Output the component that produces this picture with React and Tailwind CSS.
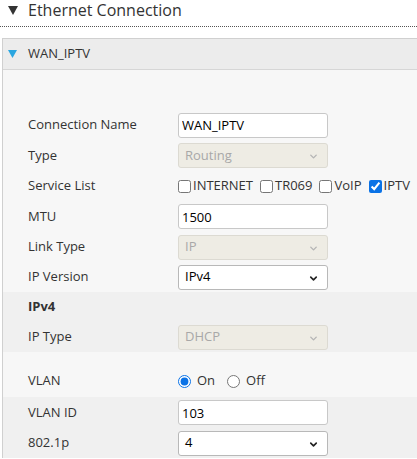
import { ChevronDown } from 'lucide-react'

function Label({ children, bold }) {
  return (
    <div className={`w-[150px] shrink-0 text-[13px] text-[#333] ${bold ? 'font-bold' : ''}`}>
      {children}
    </div>
  )
}

function TextBox({ value }) {
  return (
    <input
      readOnly
      value={value}
      className="h-[25px] w-[150px] rounded-[3px] border border-[#c8c8c8] bg-white px-[3px] text-[13px] text-black outline-none"
    />
  )
}

function SelectBox({ value, disabled }) {
  return (
    <div
      className={`relative flex h-[25px] w-[150px] items-center rounded-[3px] border px-[6px] text-[13px] ${
        disabled
          ? 'border-[#dcdad2] bg-[#eeece4] text-[#a8a8a8]'
          : 'border-[#b8b8b8] bg-white text-black'
      }`}
    >
      <span>{value}</span>
      <ChevronDown
        className={`absolute right-[8px] top-[7px] h-[11px] w-[11px] ${
          disabled ? 'text-[#b4b4b4]' : 'text-[#222]'
        }`}
        strokeWidth={disabled ? 3 : 3.5}
      />
    </div>
  )
}

function Row({ label, h = 'h-[30px]', bold, children }) {
  return (
    <div className={`flex ${h} items-center pl-[25px]`}>
      <Label bold={bold}>{label}</Label>
      {children}
    </div>
  )
}

function Check({ label, checked }) {
  return (
    <label className="flex items-center text-[13px] text-[#333]">
      <input type="checkbox" readOnly checked={checked} className="h-[13px] w-[13px] accent-[#0a72e6]" />
      <span className="ml-[2px]">{label}</span>
    </label>
  )
}

function Radio({ label, checked }) {
  return (
    <label className="flex items-center text-[13px] text-[#333]">
      <input type="radio" readOnly checked={checked} className="h-[13px] w-[13px] accent-[#0a72e6]" />
      <span className="ml-[6px]">{label}</span>
    </label>
  )
}

export default function App() {
  return (
    <div className="h-[459px] w-[417px] overflow-hidden bg-white font-['Open_Sans','Noto_Sans',sans-serif]">
      {/* Page heading */}
      <div className="flex h-[20px] items-center">
        <svg width="10" height="9" viewBox="0 0 10 9" className="ml-[8px]">
          <path d="M0 0 H10 L5 9 Z" fill="#333" />
        </svg>
        <span className="ml-[10px] text-[16px] leading-none text-[#333]">Ethernet Connection</span>
      </div>
      <div className="mt-[6px] border-b border-dotted border-[#555]" />

      {/* WAN box */}
      <div className="ml-[2px] mt-[11px] w-[430px] border-l border-t border-[#d0d0d0]">
        <div className="flex h-[31px] items-center border-b border-[#d6d6d6] bg-[#ececec]">
          <svg width="9" height="8" viewBox="0 0 9 8" className="ml-[5px]">
            <path d="M0 0 H9 L4.5 8 Z" fill="#2aa6e0" />
          </svg>
          <span className="ml-[11px] text-[13px] text-[#333]">WAN_IPTV</span>
        </div>

        <div className="bg-[#f7f7f7] pt-[40px]">
          <Row label="Connection Name">
            <TextBox value="WAN_IPTV" />
          </Row>
          <Row label="Type" h="h-[31px]">
            <SelectBox value="Routing" disabled />
          </Row>
          <Row label="Service List">
            <div className="flex items-center gap-[7px]">
              <Check label="INTERNET" />
              <Check label="TR069" />
              <Check label="VoIP" />
              <Check label="IPTV" checked />
            </div>
          </Row>
          <Row label="MTU" h="h-[31px]">
            <TextBox value="1500" />
          </Row>
          <Row label="Link Type">
            <SelectBox value="IP" disabled />
          </Row>
          <Row label="IP Version">
            <SelectBox value="IPv4" />
          </Row>
        </div>

        {/* IPv4 section */}
        <div className="bg-[#f0f0f0]">
          <Row label="IPv4" bold />
          <Row label="IP Type">
            <SelectBox value="DHCP" disabled />
          </Row>
        </div>

        {/* VLAN */}
        <div className="bg-[#f7f7f7] pb-[1px] pt-[14px]">
          <Row label="VLAN">
            <div className="flex items-center gap-[12px]">
              <Radio label="On" checked />
              <Radio label="Off" />
            </div>
          </Row>
        </div>
        <div className="bg-[#f0f0f0]">
          <Row label="VLAN ID" h="h-[31px]">
            <TextBox value="103" />
          </Row>
          <Row label="802.1p">
            <SelectBox value="4" />
          </Row>
        </div>
      </div>
    </div>
  )
}
